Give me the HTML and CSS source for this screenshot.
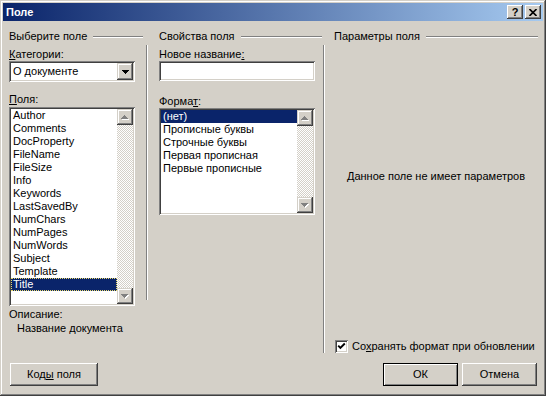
FILE: index.html
```html
<!DOCTYPE html>
<html>
<head>
<meta charset="utf-8">
<link rel="stylesheet" href="styles.css">
</head>
<body>
<div class="window">
  <div class="titlebar">
    <span class="title">Поле</span>
    <div class="tbtns">
      <span class="tbtn q">?</span>
      <span class="tbtn"><svg width="8" height="7" viewBox="0 0 8 7"><path d="M0.5 0 L7.5 7 M7.5 0 L0.5 7" stroke="#000" stroke-width="1.6"/></svg></span>
    </div>
  </div>
  <div class="main">
    <div class="col col1">
      <div class="head"><span>Выберите поле</span><i class="hline"></i></div>
      <div class="lbl"><u>К</u>атегории:</div>
      <div class="combo">
        <span class="combo-text">О документе</span>
        <span class="dd-btn"><svg width="7" height="4" viewBox="0 0 7 4"><rect x="0" y="0" width="7" height="1"/><rect x="1" y="1" width="5" height="1"/><rect x="2" y="2" width="3" height="1"/><rect x="3" y="3" width="1" height="1"/></svg></span>
      </div>
      <div class="lbl lbl-list"><u>П</u>оля:</div>
      <div class="listbox lb1">
        <ul class="items">
          <li>Author</li>
          <li>Comments</li>
          <li>DocProperty</li>
          <li>FileName</li>
          <li>FileSize</li>
          <li>Info</li>
          <li>Keywords</li>
          <li>LastSavedBy</li>
          <li>NumChars</li>
          <li>NumPages</li>
          <li>NumWords</li>
          <li>Subject</li>
          <li>Template</li>
          <li class="sel focus">Title</li>
        </ul>
        <div class="sbar">
          <span class="sbtn"><svg width="8" height="5" viewBox="0 0 8 5"><g fill="#fff" transform="translate(1 1)"><rect x="3" y="0" width="1" height="1"/><rect x="2" y="1" width="3" height="1"/><rect x="1" y="2" width="5" height="1"/><rect x="0" y="3" width="7" height="1"/></g><g fill="#808080"><rect x="3" y="0" width="1" height="1"/><rect x="2" y="1" width="3" height="1"/><rect x="1" y="2" width="5" height="1"/><rect x="0" y="3" width="7" height="1"/></g></svg></span>
          <span class="track"></span>
          <span class="sbtn"><svg width="8" height="5" viewBox="0 0 8 5"><g fill="#fff" transform="translate(1 1)"><rect x="0" y="0" width="7" height="1"/><rect x="1" y="1" width="5" height="1"/><rect x="2" y="2" width="3" height="1"/><rect x="3" y="3" width="1" height="1"/></g><g fill="#808080"><rect x="0" y="0" width="7" height="1"/><rect x="1" y="1" width="5" height="1"/><rect x="2" y="2" width="3" height="1"/><rect x="3" y="3" width="1" height="1"/></g></svg></span>
        </div>
      </div>
      <div class="desc-lbl">Описание:</div>
      <div class="desc">Название документа</div>
    </div>
    <div class="vsep vsep1"></div>
    <div class="col col2">
      <div class="head"><span>Свойства поля</span><i class="hline"></i></div>
      <div class="lbl">Новое название<u>:</u></div>
      <div class="edit"></div>
      <div class="lbl lbl-fmt">Форма<u>т</u>:</div>
      <div class="listbox lb2">
        <ul class="items">
          <li class="sel">(нет)</li>
          <li>Прописные буквы</li>
          <li>Строчные буквы</li>
          <li>Первая прописная</li>
          <li>Первые прописные</li>
        </ul>
        <div class="sbar">
          <span class="sbtn"><svg width="8" height="5" viewBox="0 0 8 5"><g fill="#fff" transform="translate(1 1)"><rect x="3" y="0" width="1" height="1"/><rect x="2" y="1" width="3" height="1"/><rect x="1" y="2" width="5" height="1"/><rect x="0" y="3" width="7" height="1"/></g><g fill="#808080"><rect x="3" y="0" width="1" height="1"/><rect x="2" y="1" width="3" height="1"/><rect x="1" y="2" width="5" height="1"/><rect x="0" y="3" width="7" height="1"/></g></svg></span>
          <span class="track"></span>
          <span class="sbtn"><svg width="8" height="5" viewBox="0 0 8 5"><g fill="#fff" transform="translate(1 1)"><rect x="0" y="0" width="7" height="1"/><rect x="1" y="1" width="5" height="1"/><rect x="2" y="2" width="3" height="1"/><rect x="3" y="3" width="1" height="1"/></g><g fill="#808080"><rect x="0" y="0" width="7" height="1"/><rect x="1" y="1" width="5" height="1"/><rect x="2" y="2" width="3" height="1"/><rect x="3" y="3" width="1" height="1"/></g></svg></span>
        </div>
      </div>
    </div>
    <div class="vsep vsep2"></div>
    <div class="col col3">
      <div class="head"><span>Параметры поля</span><i class="hline"></i></div>
      <div class="noparams">Данное поле не имеет параметров</div>
      <div class="checkrow">
        <span class="checkbox"><svg width="9" height="9" viewBox="0 0 9 9"><path d="M1.2 3.6 L3.4 5.9 L7.8 1.5" fill="none" stroke="#000" stroke-width="1.9"/></svg></span>
        <span>Со<u>х</u>ранять формат при обновлении</span>
      </div>
    </div>
  </div>
  <div class="buttons">
    <span class="btn btn-codes"><span>Код<u>ы</u> поля</span></span>
    <span class="btn btn-ok"><span>ОК</span></span>
    <span class="btn btn-cancel"><span>Отмена</span></span>
  </div>
</div>
</body>
</html>
```
FILE: styles.css
```css
* { box-sizing: border-box; }
html, body { margin: 0; padding: 0; }
body {
  width: 546px;
  height: 396px;
  overflow: hidden;
  font-family: "Liberation Sans", Arial, sans-serif;
  font-size: 11px;
  line-height: 13px;
  color: #000;
  background: #d4d0c8;
}
u { text-decoration: underline; text-underline-offset: 1px; }

.window {
  width: 546px;
  height: 396px;
  padding: 3px;
  display: flex;
  flex-direction: column;
  background: #d4d0c8;
  box-shadow: inset -1px -1px #404040, inset 1px 1px #d4d0c8, inset -2px -2px #808080, inset 2px 2px #fff;
}

.titlebar {
  flex: none;
  height: 18px;
  display: flex;
  align-items: center;
  padding: 0 2px 0 3px;
  background: linear-gradient(to right, #0a246a, #a6caf0);
  color: #fff;
  font-weight: bold;
}
.title { flex: 1; }
.tbtns { display: flex; gap: 2px; }
.tbtn {
  width: 16px;
  height: 14px;
  display: flex;
  align-items: center;
  justify-content: center;
  background: #d4d0c8;
  color: #000;
  font-size: 11px;
  box-shadow: inset -1px -1px #404040, inset 1px 1px #fff, inset -2px -2px #808080;
}
.tbtn.q { font-weight: bold; padding-top: 1px; }

.main {
  flex: 1;
  display: flex;
  padding-top: 9px;
}
.col { display: flex; flex-direction: column; }
.col1 { width: 137px; margin-left: 6px; }
.col2 { width: 175px; padding-left: 11px; }
.col3 { flex: 1; padding-left: 9px; padding-right: 5px; }

.head { display: flex; align-items: flex-start; height: 13px; }
.col1 .head { margin-right: 3px; }
.col2 .head { margin-right: 1px; }
.hline {
  flex: 1;
  height: 2px;
  margin-top: 6px;
  margin-left: 6px;
  border-top: 1px solid #808080;
  border-bottom: 1px solid #fff;
}

.vsep {
  flex: none;
  width: 2px;
  margin-top: 15px;
  border-left: 1px solid #808080;
  border-right: 1px solid #fff;
}
.vsep1 { height: 255px; }
.vsep2 { height: 308px; }

.lbl { margin-top: 5px; height: 13px; }
.lbl-list { margin-top: 11px; }
.lbl-fmt { margin-top: 14px; }

.combo {
  width: 126px;
  height: 21px;
  padding: 2px;
  display: flex;
  background: #fff;
  box-shadow: inset 1px 1px #808080, inset -1px -1px #fff, inset 2px 2px #404040, inset -2px -2px #d4d0c8;
}
.combo-text { flex: 1; padding-left: 2px; line-height: 17px; }
.dd-btn {
  width: 16px;
  height: 17px;
  display: flex;
  align-items: center;
  justify-content: center;
  background: #d4d0c8;
  box-shadow: inset -1px -1px #404040, inset 1px 1px #d4d0c8, inset -2px -2px #808080, inset 2px 2px #fff;
}
.dd-btn svg { fill: #000; }

.edit {
  width: 156px;
  height: 20px;
  background: #fff;
  box-shadow: inset 1px 1px #808080, inset -1px -1px #fff, inset 2px 2px #404040, inset -2px -2px #d4d0c8;
}

.listbox {
  display: flex;
  padding: 2px;
  background: #fff;
  box-shadow: inset 1px 1px #808080, inset -1px -1px #fff, inset 2px 2px #404040, inset -2px -2px #d4d0c8;
}
.lb1 { width: 126px; height: 199px; margin-top: 1px; }
.lb2 { width: 156px; height: 107px; }

.items {
  flex: 1;
  margin: 0;
  padding: 0;
  list-style: none;
}
.items li { height: 13px; padding-left: 2px; white-space: nowrap; }
.items li.sel { background: #0a246a; color: #fff; }
.items li.focus { outline: 1px dotted #e8d86a; outline-offset: -1px; }

.sbar { width: 16px; display: flex; flex-direction: column; }
.track {
  flex: 1;
  background-color: #fff;
  background-image: conic-gradient(#fff 0 25%, #d4d0c8 0 50%, #fff 0 75%, #d4d0c8 0);
  background-size: 2px 2px;
}
.sbtn {
  width: 16px;
  height: 16px;
  flex: none;
  display: flex;
  align-items: center;
  justify-content: center;
  background: #d4d0c8;
  box-shadow: inset -1px -1px #404040, inset 1px 1px #d4d0c8, inset -2px -2px #808080, inset 2px 2px #fff;
}

.desc-lbl { margin-top: 2px; }
.desc { margin-top: 1px; padding-left: 8px; }

.noparams { margin-top: 127px; text-align: center; }
.checkrow {
  margin-top: 157px;
  display: flex;
  align-items: center;
  gap: 4px;
  height: 13px;
  padding-left: 1px;
}
.checkbox {
  width: 13px;
  height: 13px;
  padding: 2px;
  background: #fff;
  box-shadow: inset 1px 1px #808080, inset -1px -1px #fff, inset 2px 2px #404040, inset -2px -2px #d4d0c8;
}
.checkbox svg { display: block; }

.buttons {
  flex: none;
  height: 30px;
  display: flex;
  gap: 4px;
  padding: 0 6px 7px 7px;
}
.btn {
  height: 23px;
  display: flex;
  align-items: center;
  justify-content: center;
  background: #d4d0c8;
  box-shadow: inset -1px -1px #404040, inset 1px 1px #fff, inset -2px -2px #808080;
}
.btn-codes { width: 88px; }
.btn-ok {
  width: 75px;
  margin-left: auto;
  box-shadow: inset 0 0 0 1px #000, inset 2px 2px #fff, inset -2px -2px #808080;
}
.btn-cancel { width: 75px; }
```
